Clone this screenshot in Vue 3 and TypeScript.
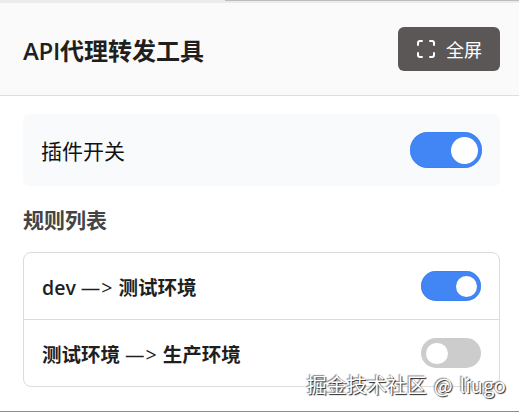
<template>
	<div class="popup">
		<div class="edge"><i /></div>
		<header class="header">
			<h1 class="title"><span class="latin">API</span>代理转发工具</h1>
			<button class="fullscreen">
				<svg viewBox="0 0 20 20" fill="none" stroke="currentColor" stroke-width="2" stroke-linecap="round" stroke-linejoin="round">
					<path d="M2 6V4a2 2 0 0 1 2-2h2M14 2h2a2 2 0 0 1 2 2v2M18 14v2a2 2 0 0 1-2 2h-2M6 18H4a2 2 0 0 1-2-2v-2" />
				</svg>
				<span>全屏</span>
			</button>
		</header>
		<main class="content">
			<section class="plugin">
				<span>插件开关</span>
				<button class="switch large" :class="{ on: enabled }" @click="enabled = !enabled" />
			</section>
			<h2 class="subtitle">规则列表</h2>
			<ul class="rules">
				<li v-for="rule in rules" :key="rule.from" class="rule">
					<span class="name">{{ rule.from }} <span class="arrow">—&gt;</span> {{ rule.to }}</span>
					<button class="switch" :class="{ on: rule.enabled }" @click="rule.enabled = !rule.enabled" />
				</li>
			</ul>
		</main>
		<div class="watermark">掘金技术社区 @ liugo</div>
	</div>
</template>

<script setup lang="ts">
import { reactive, ref } from 'vue';

interface Rule {
	from: string;
	to: string;
	enabled: boolean;
}

const enabled = ref(true);
const rules = reactive<Rule[]>([
	{ from: 'dev', to: '测试环境', enabled: true },
	{ from: '测试环境', to: '生产环境', enabled: false },
]);
</script>

<style>
body {
	margin: 0;
	background: #fff;
}
</style>

<style scoped>
.popup {
	position: relative;
	box-sizing: border-box;
	display: flex;
	flex-direction: column;
	height: 412px;
	overflow: hidden;
	border-bottom: 1px solid #8c8c8c;
	color: #1f1f1f;
	font-family: 'Open Sans', 'Noto Sans CJK SC', sans-serif;
}

.edge {
	height: 3px;
	background: #ebebeb;
}

.edge i {
	display: block;
	width: 294px;
	height: 1px;
	margin-left: 225px;
	background: #bdbdbd;
}

.header {
	box-sizing: border-box;
	display: flex;
	align-items: center;
	justify-content: space-between;
	height: 93px;
	padding: 0 19px 0 23px;
	border-bottom: 1px solid #dedede;
	background: #fafafa;
}

.title {
	margin: 4px 0 0;
	font-size: 24px;
	font-weight: 700;
	line-height: 36px;
}

.title .latin {
	font-weight: 600;
	letter-spacing: -0.3px;
}

.fullscreen {
	display: flex;
	align-items: center;
	gap: 10px;
	height: 44px;
	margin-bottom: 1px;
	padding: 0 18px;
	border: 0;
	border-radius: 6px;
	background: #5b5757;
	color: #fff;
	font: 18px/26px 'Noto Sans CJK SC', sans-serif;
}

.fullscreen svg {
	width: 20px;
	height: 20px;
}

.content {
	padding: 18px 19px 0 23px;
}

.plugin {
	display: flex;
	align-items: center;
	justify-content: space-between;
	height: 72px;
	padding: 0 18px;
	border-radius: 6px;
	background: #f8fafc;
	color: #111;
	font-size: 21px;
}

.subtitle {
	margin: 18px 0 16px;
	color: #444;
	font-size: 21px;
	font-weight: 700;
	line-height: 32px;
}

.rules {
	margin: 0;
	padding: 0;
	border: 1px solid #dcdcdc;
	border-radius: 8px;
	list-style: none;
}

.rule {
	display: flex;
	align-items: center;
	justify-content: space-between;
	height: 66px;
	padding: 0 18px;
}

.rule + .rule {
	border-top: 1px solid #dcdcdc;
}

.name {
	font-size: 19.5px;
	font-weight: 600;
}

.arrow {
	font-weight: 400;
	letter-spacing: 1px;
}

.switch {
	box-sizing: border-box;
	display: flex;
	align-items: center;
	width: 60px;
	height: 30px;
	padding: 1px 4px 0 5px;
	border: 0;
	border-radius: 18px;
	background: #ccc;
	cursor: pointer;
}

.switch::after {
	content: '';
	width: 21.5px;
	height: 21.5px;
	border-radius: 50%;
	background: #fff;
}

.switch.on {
	justify-content: flex-end;
	background: #4285f4;
	box-shadow: inset 0 0 1px #0969e8;
}

.switch.large {
	width: 72px;
	height: 36px;
}

.switch.large::after {
	width: 27.5px;
	height: 27.5px;
}

.watermark {
	position: absolute;
	right: 13px;
	bottom: 11px;
	color: #fff;
	font: 20px/30px 'Noto Sans CJK SC', sans-serif;
	text-shadow: 1px 1px 1px #222, -1px -1px 1px #888;
	white-space: nowrap;
	word-spacing: 2.5px;
}
</style>
